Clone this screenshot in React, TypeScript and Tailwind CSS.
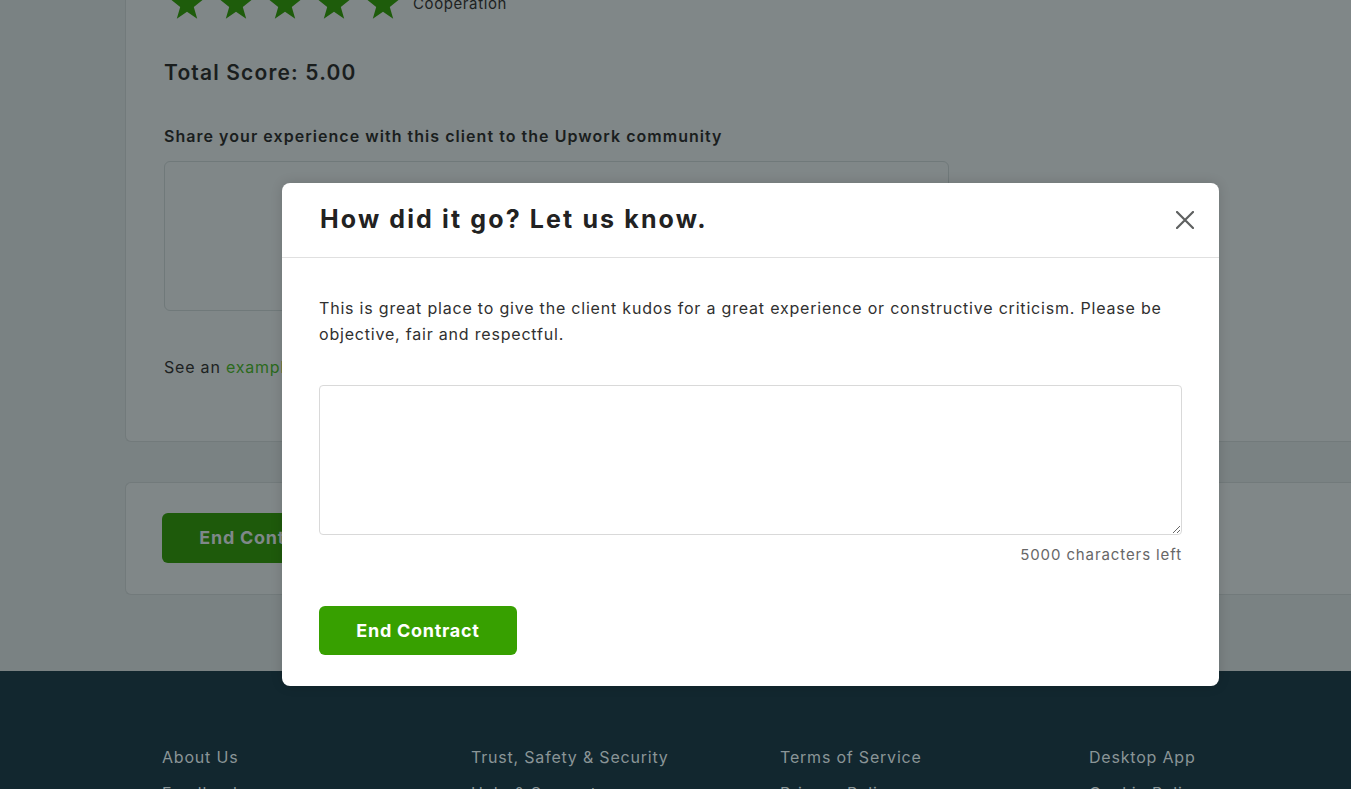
const FONT = { fontFamily: "Inter, 'Noto Sans', sans-serif" };

function Star() {
  return (
    <svg width="34" height="33" viewBox="0 0 24 23" className="shrink-0">
      <polygon
        points="12,0.5 15,8.3 23.5,8.6 16.8,13.9 19.2,22.3 12,17.4 4.8,22.3 7.2,13.9 0.5,8.6 9,8.3"
        fill="#1e5c0b"
      />
    </svg>
  );
}

function CloseIcon() {
  return (
    <svg width="18" height="18" viewBox="0 0 18 18" className="shrink-0">
      <path d="M1 1 L17 17 M17 1 L1 17" stroke="#5e6060" strokeWidth="2.2" strokeLinecap="round" />
    </svg>
  );
}

const footerCols = [
  ["About Us", "Feedback"],
  ["Trust, Safety & Security", "Help & Support"],
  ["Terms of Service", "Privacy Policy"],
  ["Desktop App", "Cookie Policy"],
];

export default function App() {
  return (
    <div className="relative h-[789px] overflow-hidden bg-[#7a8283]" style={FONT}>
      {/* Page behind the overlay (already dimmed colours) */}
      <div className="pl-[125px]">
        <div className="-mt-[36px] rounded-bl-md border-b border-l border-[#727a7b] bg-[#808788] pl-[38px] pt-[23px] pb-[62px]">
          <div className="flex">
            <div className="ml-[6px] flex gap-[15px]">
              <Star />
              <Star />
              <Star />
              <Star />
              <Star />
            </div>
            <span className="ml-[13px] mt-[6px] text-[15px] leading-[22px] tracking-[0.04em] text-[#1d2222]">
              Cooperation
            </span>
          </div>
          <div className="mt-[37px] text-[21px] font-semibold tracking-[0.055em] text-[#1a1e1e]">Total Score: 5.00</div>
          <div className="mt-[35px] text-[16px] font-semibold tracking-[0.065em] text-[#1a1e1e]">
            Share your experience with this client to the Upwork community
          </div>
          <div className="mt-[13px] h-[150px] w-[785px] rounded-md border border-[#70797a]" />
          <div className="mt-[44px] text-[16px] tracking-[0.05em] text-[#1d2222]">
            See an <span className="text-[#2b6a1c]">example</span> of appropriate feedback
          </div>
        </div>

        <div className="mt-[40px] h-[113px] rounded-l-md border-y border-l border-[#727a7b] bg-[#808788] pl-[36px] pt-[30px]">
          <button className="h-[50px] w-[198px] rounded-md bg-[#1e5a0b] text-[18px] font-bold tracking-[0.04em] text-[#7f8889]">
            End Contract
          </button>
        </div>
      </div>

      <footer className="mt-[76px] h-[200px] bg-[#12272f] pl-[162px] pt-[74px]">
        <div className="grid w-[1236px] grid-cols-4">
          {footerCols.map((col) => (
            <div key={col[0]} className="flex flex-col gap-[12px] text-[16px] tracking-[0.05em] text-[#8a9597]">
              {col.map((t) => (
                <span key={t}>{t}</span>
              ))}
            </div>
          ))}
        </div>
      </footer>

      {/* Modal */}
      <div className="absolute left-[282px] top-[183px] w-[937px] rounded-lg bg-white shadow-[0_0_12px_rgba(0,0,0,0.15)]">
        <div className="flex h-[75px] items-center justify-between border-b border-[#e0e0e0] pl-[38px] pr-[25px]">
          <h2 className="text-[25px] font-bold tracking-[0.085em] text-[#222]">How did it go? Let us know.</h2>
          <CloseIcon />
        </div>
        <div className="px-[37px] pb-[31px] pt-[37px]">
          <p className="text-[16px] leading-[26px] tracking-[0.05em] text-[#303030]">
            This is great place to give the client kudos for a great experience or constructive criticism. Please be
            objective, fair and respectful.
          </p>
          <textarea className="mt-[38px] block h-[150px] w-full rounded border border-[#d9d9d9] outline-none" />
          <div className="mt-[9px] text-right text-[15px] tracking-[0.06em] text-[#676767]">5000 characters left</div>
          <button className="mt-[39px] h-[49px] w-[198px] rounded-md bg-[#37a000] text-[18px] font-bold tracking-[0.04em] text-white">
            End Contract
          </button>
        </div>
      </div>
    </div>
  );
}
